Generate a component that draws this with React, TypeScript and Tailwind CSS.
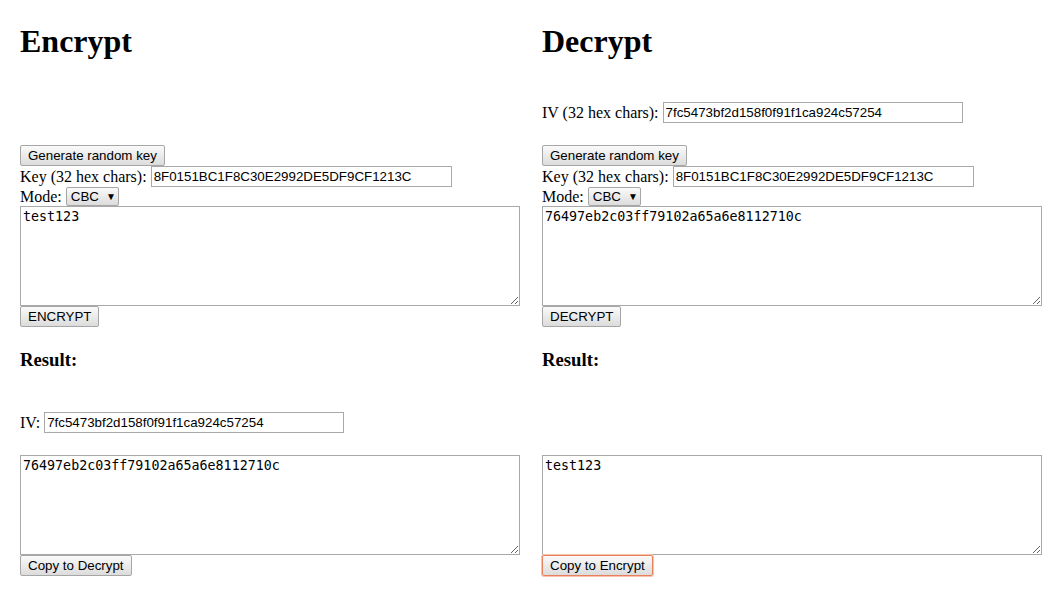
import React from "react";

const serif = "font-['Liberation_Serif','Times_New_Roman',serif]";
const sans = "font-['Liberation_Sans',Arial,sans-serif]";
const mono = "font-['DejaVu_Sans_Mono',monospace]";

function Btn({ children, focus }: { children: React.ReactNode; focus?: boolean }) {
  return (
    <button
      className={`${sans} h-[21px] self-start px-[7px] text-[13.33px] leading-[15px] text-black rounded-[2px] border bg-gradient-to-b from-[#fafafa] to-[#dcdcdc] ${
        focus ? "border-[#e8805c] ring-1 ring-[#f7c2ad]" : "border-[#a6a6a6]"
      }`}
    >
      {children}
    </button>
  );
}

function TextInput({ value, w }: { value: string; w: string }) {
  return (
    <div
      className={`${sans} ${w} h-[21px] border border-[#a9a9a9] bg-white px-[2px] text-[13.33px] leading-[19px] text-black whitespace-nowrap overflow-hidden`}
    >
      {value}
    </div>
  );
}

function Area({ value }: { value: string }) {
  return (
    <textarea
      readOnly
      defaultValue={value}
      className={`${mono} block w-[500px] h-[100px] border border-[#a9a9a9] bg-white p-[2px] text-[13.33px] leading-[16px] text-black resize outline-none`}
    />
  );
}

function Row({ label, children, hidden }: { label: string; children: React.ReactNode; hidden?: boolean }) {
  return (
    <div className={`flex items-center gap-[4px] h-[21px] text-[16px] ${hidden ? "invisible" : ""}`}>
      <span className="whitespace-nowrap">{label}</span>
      {children}
    </div>
  );
}

function KeyMode({ text, btn }: { text: string; btn: string }) {
  return (
    <div className="mt-[22px] flex flex-col">
      <Btn>Generate random key</Btn>
      <Row label="Key (32 hex chars):">
        <TextInput value="8F0151BC1F8C30E2992DE5DF9CF1213C" w="w-[301px]" />
      </Row>
      <div className="flex items-center gap-[4px] h-[19px] text-[16px]">
        <span>Mode:</span>
        <div
          className={`${sans} w-[53px] h-[19px] flex items-center gap-[7px] pl-[4px] text-[13.33px] rounded-[2px] border border-[#a6a6a6] bg-gradient-to-b from-[#fafafa] to-[#dcdcdc]`}
        >
          <span>CBC</span>
          <span className="text-[10px] leading-[10px]">▼</span>
        </div>
      </div>
      <Area value={text} />
      <Btn>{btn}</Btn>
    </div>
  );
}

function Column({ side }: { side: "enc" | "dec" }) {
  const enc = side === "enc";
  return (
    <div className="w-[500px] flex flex-col">
      <h1 className="h-[36px] text-[32px] leading-[36px] font-bold">{enc ? "Encrypt" : "Decrypt"}</h1>
      <div className="mt-[43px]">
        <Row label="IV (32 hex chars):" hidden={enc}>
          <TextInput value="7fc5473bf2d158f0f91f1ca924c57254" w="w-[300px]" />
        </Row>
      </div>
      <KeyMode text={enc ? "test123" : "76497eb2c03ff79102a65a6e8112710c"} btn={enc ? "ENCRYPT" : "DECRYPT"} />
      <h3 className="mt-[22px] h-[22px] text-[18.72px] leading-[22px] font-bold">Result:</h3>
      <div className="mt-[41px]">
        <Row label="IV:" hidden={!enc}>
          <TextInput value="7fc5473bf2d158f0f91f1ca924c57254" w="w-[300px]" />
        </Row>
      </div>
      <div className="mt-[22px] flex flex-col">
        <Area value={enc ? "76497eb2c03ff79102a65a6e8112710c" : "test123"} />
        <Btn focus={!enc}>{enc ? "Copy to Decrypt" : "Copy to Encrypt"}</Btn>
      </div>
    </div>
  );
}

export default function App() {
  return (
    <div className={`${serif} w-[1054px] h-[592px] bg-white text-black pt-[23px] pl-[20px] flex gap-[22px]`}>
      <Column side="enc" />
      <Column side="dec" />
    </div>
  );
}
